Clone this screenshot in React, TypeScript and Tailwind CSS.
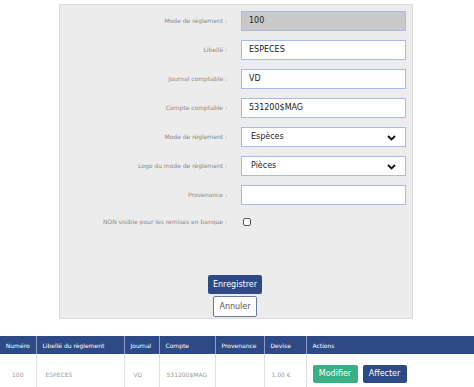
import React from "react";

const font = { fontFamily: '"DejaVu Sans", Verdana, sans-serif' };

function Label({ children }: { children: React.ReactNode }) {
  return (
    <div className="w-[168px] shrink-0 text-right pr-[1px] text-[6px] text-[#8a8a8a] leading-none">
      {children}
    </div>
  );
}

function Chevron() {
  return (
    <svg width="9" height="6" viewBox="0 0 9 6" className="absolute right-[9px] top-[7px]">
      <path d="M1 1 L4.5 4.5 L8 1" fill="none" stroke="#111" strokeWidth="1.8" />
    </svg>
  );
}

function Row({ label, children }: { label: string; children: React.ReactNode }) {
  return (
    <div className="flex items-center h-[20px]">
      <Label>{label}</Label>
      <div className="ml-[13px] w-[165px]">{children}</div>
    </div>
  );
}

function Input({ value, gray }: { value: string; gray?: boolean }) {
  return (
    <div
      className={`h-[20px] border border-[#a6bce8] flex items-center pl-[7px] text-[8px] text-[#222] ${
        gray ? "bg-[#c9c9c9]" : "bg-white"
      }`}
    >
      {value}
    </div>
  );
}

function Select({ value }: { value: string }) {
  return (
    <div className="relative h-[20px] border border-[#a6bce8] bg-white flex items-center pl-[9px] text-[8px] text-[#222]">
      {value}
      <Chevron />
    </div>
  );
}

export default function App() {
  const cols = [36, 88, 35, 56, 49, 42, 168];
  const headers = ["Numéro", "Libellé du règlement", "Journal", "Compte", "Provenance", "Devise", "Actions"];
  return (
    <div className="w-[474px] h-[387px] bg-white overflow-hidden" style={font}>
      <div className="pt-[4px] pl-[59px]">
        <div className="w-[354px] h-[315px] bg-[#ececec] border border-[#dcdcdc] pt-[6px] flex flex-col">
          <div className="flex flex-col gap-[9px]">
            <Row label="Mode de règlement :">
              <Input value="100" gray />
            </Row>
            <Row label="Libellé :">
              <Input value="ESPECES" />
            </Row>
            <Row label="Journal comptable :">
              <Input value="VD" />
            </Row>
            <Row label="Compte comptable :">
              <Input value="531200$MAG" />
            </Row>
            <Row label="Mode de règlement :">
              <Select value="Espèces" />
            </Row>
            <Row label="Logo du mode de règlement :">
              <Select value="Pièces" />
            </Row>
            <Row label="Provenance :">
              <Input value="" />
            </Row>
          </div>
          <div className="flex items-center h-[14px] mt-[10px]">
            <Label>NON visible pour les remises en banque :</Label>
            <div className="ml-[15px] w-[8px] h-[8px] border border-[#555] rounded-[2px] bg-white" />
          </div>
          <div className="flex flex-col items-center mt-[46px] -ml-[2px]">
            <div className="w-[54px] h-[19px] bg-[#2e4a86] rounded-[2px] text-white text-[8px] flex items-center justify-center">
              Enregistrer
            </div>
            <div className="mt-[2px] w-[44px] h-[21px] bg-white border-[1.5px] border-[#6b7896] rounded-[2px] text-[#555] text-[8px] flex items-center justify-center">
              Annuler
            </div>
          </div>
        </div>
      </div>
      <table className="mt-[17px] table-fixed border-collapse w-[474px]">
        <colgroup>
          {cols.map((w, i) => (
            <col key={i} style={{ width: w }} />
          ))}
        </colgroup>
        <thead>
          <tr className="bg-[#2e4a86] h-[18px]">
            {headers.map((h, i) => (
              <th
                key={h}
                className={`text-[6px] font-normal text-white border-l border-[#8a9cc2] first:border-l-0 ${
                  i === 0 ? "text-center" : "text-left pl-[6px]"
                }`}
              >
                {h}
              </th>
            ))}
          </tr>
        </thead>
        <tbody>
          <tr className="h-[40px] text-[6px] text-[#9a9a9a]">
            <td className="text-center">100</td>
            <td className="pl-[9px] border-l border-[#dedede]">ESPECES</td>
            <td className="pl-[9px] border-l border-[#dedede]">VD</td>
            <td className="pl-[7px] border-l border-[#dedede]">531200$MAG</td>
            <td className="border-l border-[#dedede]"></td>
            <td className="pl-[7px] border-l border-[#dedede]">1.00 €</td>
            <td className="pl-[6px] border-l border-[#dedede]">
              <div className="flex gap-[5px]">
                <div className="w-[45px] h-[18px] bg-[#3aae84] rounded-[2px] text-white text-[8px] flex items-center justify-center">
                  Modifier
                </div>
                <div className="w-[44px] h-[18px] bg-[#2e4a86] rounded-[2px] text-white text-[8px] flex items-center justify-center">
                  Affecter
                </div>
              </div>
            </td>
          </tr>
        </tbody>
      </table>
    </div>
  );
}
